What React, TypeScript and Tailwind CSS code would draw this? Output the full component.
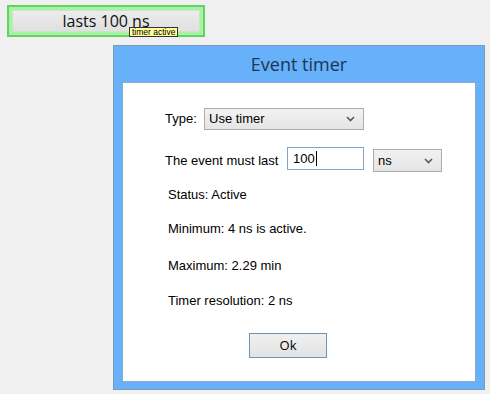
import React from 'react';

const Chevron: React.FC = () => (
    <svg width="9" height="6" viewBox="0 0 9 6" className="shrink-0">
        <path d="M1 1 L4.5 4.5 L8 1" fill="none" stroke="#5a5a5a" strokeWidth="1.6" />
    </svg>
);

const Select: React.FC<{ value: string; className: string }> = ({ value, className }) => (
    <div className={`flex items-center justify-between border border-[#acacac] bg-gradient-to-b from-[#f2f2f2] to-[#e5e5e5] pl-[4px] pr-[8px] text-[13px] text-black ${className}`}>
        <span>{value}</span>
        <Chevron />
    </div>
);

const App: React.FC = () => {
    return (
        <div className="relative h-[394px] w-[490px] overflow-hidden bg-[#f0f0f0] font-['Liberation_Sans',Arial,sans-serif]">
            {/* node button */}
            <div className="ml-[7px] mt-[5px] w-[198px] h-[32px] border-2 border-[#62d262] bg-[#a9f1a4] p-[3px]">
                <div className="flex h-full items-center justify-center border border-[#c9e6c4] bg-gradient-to-b from-[#ececec] to-[#e0e0e0] font-['Open_Sans',sans-serif] text-[16px] text-[#111]">
                    lasts 100 ns
                </div>
            </div>
            <div className="absolute left-[129px] top-[27px] flex h-[10px] items-center border border-[#333] bg-[#ffff9c] px-[2px] text-[8.5px] leading-none text-black">
                timer active
            </div>

            {/* dialog */}
            <div className="ml-[113px] mt-[8px] flex h-[345px] w-[372px] flex-col border border-[#7d9cbc] bg-[#66b1f9]">
                <div className="flex h-[36px] items-center justify-center font-['Open_Sans',sans-serif] text-[18px] text-[#1d3652]">
                    Event timer
                </div>
                <div className="mx-[8px] mb-[7px] flex flex-1 flex-col border border-[#8aa9c7] bg-white text-[13px] text-black">
                    <div className="ml-[42px] mt-[25px] flex h-[22px] items-center">
                        <span className="w-[39px]">Type:</span>
                        <Select value="Use timer" className="h-[22px] w-[160px]" />
                    </div>
                    <div className="ml-[42px] mt-[17px] flex items-start">
                        <span className="mt-[4px] w-[122px]">The event must last</span>
                        <div className="flex h-[23px] w-[77px] items-center border border-[#7aa6cf] pl-[5px] text-[13px]">
                            100<span className="ml-[1px] inline-block h-[15px] w-px bg-black" />
                        </div>
                        <Select value="ns" className="ml-[9px] mt-[2px] h-[23px] w-[69px]" />
                    </div>
                    <div className="ml-[45px] mt-[15px] leading-[15px]">Status: Active</div>
                    <div className="ml-[45px] mt-[19px] leading-[15px]">Minimum: 4 ns is active.</div>
                    <div className="ml-[45px] mt-[22px] leading-[15px]">Maximum: 2.29 min</div>
                    <div className="ml-[45px] mt-[20px] leading-[15px]">Timer resolution: 2 ns</div>
                    <div className="ml-[126px] mt-[25px] flex h-[25px] w-[78px] items-center justify-center border border-[#7093b4] bg-gradient-to-b from-[#f0f0f0] to-[#e3e3e3] font-['Open_Sans',sans-serif] text-[13px]">
                        Ok
                    </div>
                </div>
            </div>
        </div>
    );
};

export default App;
